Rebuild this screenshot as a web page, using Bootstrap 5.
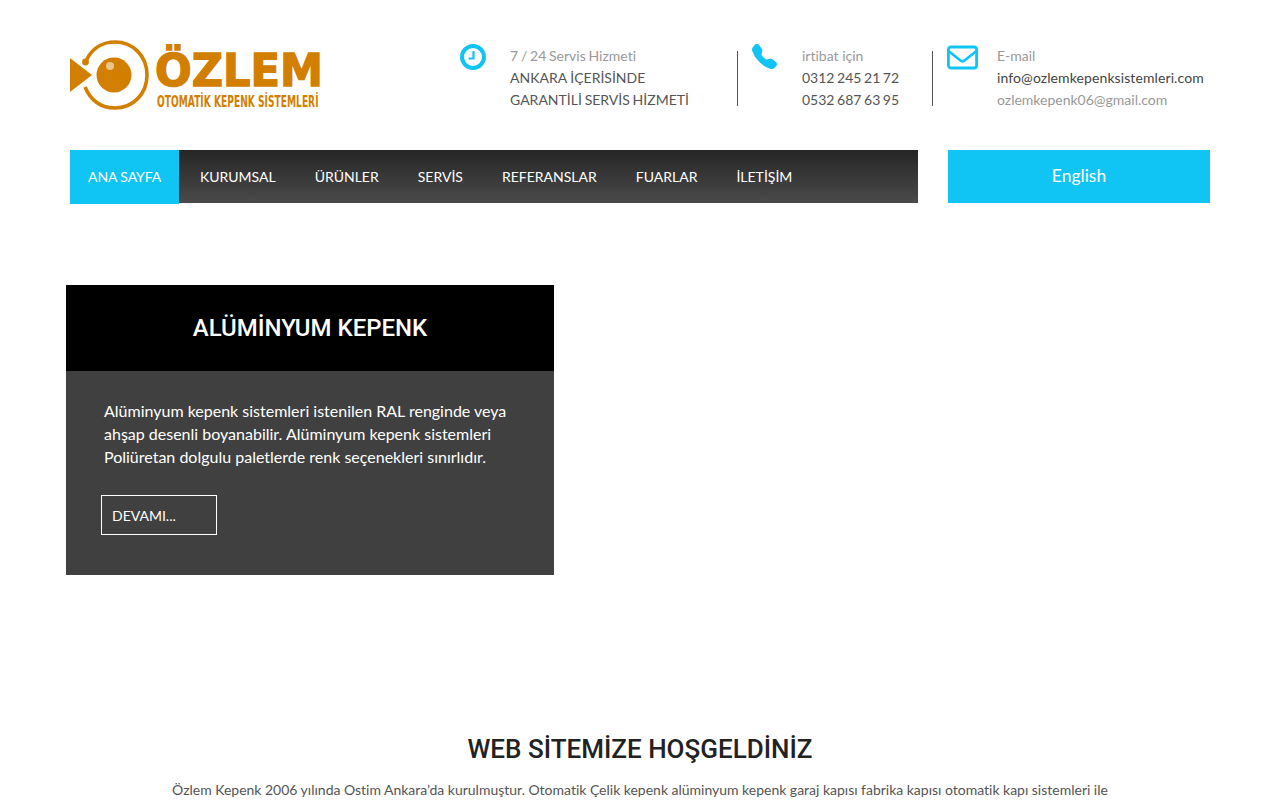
<!DOCTYPE html>
<html lang="tr">
<head>
  <meta charset="UTF-8">
  <meta name="viewport" content="width=device-width, initial-scale=1">
  <title>Özlem Otomatik Kepenk Sistemleri</title>
  <link href="https://cdn.jsdelivr.net/npm/bootstrap@5.3.0/dist/css/bootstrap.min.css" rel="stylesheet">
  <style>
    html, body { height: 800px; overflow: hidden; }
    body { font-family: Lato, "Liberation Sans", sans-serif; font-size: 14px; color: #555; background: #fff; font-variant-ligatures: none; }
    .site-wrap { width: 1140px; margin-left: 70px; }
    .top-head { height: 150px; padding-top: 40px; }
    .logo-box { flex: none; width: 390px; height: 70px; }
    .logo-box svg { display: block; }
    .logo-big { font-family: "DejaVu Sans", sans-serif; font-weight: 700; font-size: 45px; fill: #d27f00; stroke: #d27f00; stroke-width: 1.4px; }
    .logo-small { font-family: "DejaVu Sans", sans-serif; font-weight: 700; font-size: 16px; fill: #d27f00; }
    .info-box { flex: none; height: 66px; margin-top: 5px; line-height: 22px; white-space: nowrap; }
    .info-box svg { display: block; flex: none; }
    .info-1 { width: 278px; }
    .info-2 { width: 181px; margin-left: 14px; }
    .info-3 { margin-left: 14px; }
    .info-line { flex: none; width: 1px; height: 55px; margin: 6px 0 0 auto; background: #555; }
    .icon-cell { flex: none; width: 50px; }
    .info-faint { color: #999; }
    .info-dark { color: #444; letter-spacing: .1px; }
    .tight-words { word-spacing: -.8px; }
    .phone-line { word-spacing: -1px; }
    .nav-row { height: 54px; }
    .main-menu { width: 848px; height: 53px; background: linear-gradient(to bottom, #262626, #4a4a4a); }
    .main-menu a { display: block; height: 53px; line-height: 53px; padding: 0 19.5px; color: #fff; text-decoration: none; text-transform: uppercase; font-size: 14px; white-space: nowrap; }
    .main-menu a.menu-on { background: #10c4f3; width: 109px; height: 54px; padding: 0 18px; margin-right: 1.5px; letter-spacing: -.1px; }
    .lang-btn { display: block; width: 262px; height: 53px; margin-left: 30px; background: #10c4f3; color: #fff; text-align: center; line-height: 51px; font-size: 17.5px; text-decoration: none; }
    .promo-box { width: 488px; height: 290px; margin: 81px 0 0 66px; background: #404040; color: #fff; }
    .promo-head { height: 86px; background: #000; font-family: Roboto, sans-serif; font-weight: 500; font-size: 24px; line-height: 86px; text-align: center; margin: 0; }
    .promo-body { padding: 28px 38px 0 38px; }
    .promo-body p { font-size: 16px; line-height: 23px; margin: 0; }
    .more-btn { display: block; width: 116px; height: 40px; margin: 27px 0 0 -3px; padding: 0 10px; border: 1px solid #fff; border-radius: 0; color: #fff; background: transparent; font-size: 14px; line-height: 39px; text-align: left; }
    .more-btn:hover { color: #fff; }
    .welcome { margin-top: 156px; text-align: center; }
    .welcome h2 { font-family: Roboto, sans-serif; font-weight: 500; font-size: 26px; line-height: 36px; color: #222; margin: 0 0 12px; }
    .welcome p { font-size: 14px; line-height: 22px; margin: 0; color: #555; white-space: nowrap; word-spacing: -.1px; }
  </style>
</head>
<body>
  <div class="site-wrap">
    <div class="top-head d-flex align-items-start">
      <div class="logo-box">
        <svg width="256" height="70" viewBox="0 0 256 70">
          <path d="M0 18 L22 35 L0 52 Z" fill="#d27f00"/>
          <circle cx="44" cy="35" r="17.5" fill="#d27f00"/>
          <circle cx="40" cy="26" r="4" fill="#fff" opacity=".55"/>
          <path d="M16 21 C22 8 33 2 45 2 C63 2 77 16 77 35 C77 54 63 68 45 68 C31 68 21 61 15 47" fill="none" stroke="#d27f00" stroke-width="3.6"/>
          <circle cx="15.5" cy="22" r="3.4" fill="#d27f00"/>
          <text class="logo-big" transform="translate(85 46) scale(.96 1)">ÖZLEM</text>
          <text class="logo-small" transform="translate(87 67) scale(.57 1)">OTOMATİK KEPENK SİSTEMLERİ</text>
        </svg>
      </div>
      <div class="info-box info-1 d-flex">
        <div class="icon-cell">
          <svg width="26" height="26" viewBox="0 0 26 26" style="margin-top:-1px">
            <circle cx="13" cy="13" r="11" fill="none" stroke="#10c4f3" stroke-width="4"/>
            <path d="M13.5 7 V14.5 H8.5" fill="none" stroke="#10c4f3" stroke-width="2.2"/>
          </svg>
        </div>
        <div>
          <div class="info-faint tight-words">7 / 24 Servis Hizmeti</div>
          <div>ANKARA İÇERİSİNDE</div>
          <div class="tight-words">GARANTİLİ SERVİS HİZMETİ</div>
        </div>
        <div class="info-line"></div>
      </div>
      <div class="info-box info-2 d-flex">
        <div class="icon-cell">
          <svg width="25" height="25" viewBox="0 0 16 16" style="margin-top:-1px">
            <path fill="#10c4f3" d="M1.885.511a1.745 1.745 0 0 1 2.61.163L6.29 2.98c.329.423.445.974.315 1.494l-.547 2.19a.678.678 0 0 0 .178.643l2.457 2.457a.678.678 0 0 0 .644.178l2.189-.547a1.745 1.745 0 0 1 1.494.315l2.306 1.794c.829.645.905 1.87.163 2.611l-1.034 1.034c-.74.74-1.846 1.065-2.877.702a18.634 18.634 0 0 1-7.01-4.42 18.634 18.634 0 0 1-4.42-7.009c-.362-1.03-.037-2.137.703-2.877L1.885.511z"/>
          </svg>
        </div>
        <div>
          <div class="info-faint">irtibat için</div>
          <div class="phone-line">0312 245 21 72</div>
          <div class="phone-line">0532 687 63 95</div>
        </div>
        <div class="info-line"></div>
      </div>
      <div class="info-box info-3 d-flex">
        <div class="icon-cell">
          <svg width="31" height="25" viewBox="0 0 31 25">
            <rect x="1.4" y="2" width="28.2" height="21" rx="2.5" fill="none" stroke="#10c4f3" stroke-width="2.8"/>
            <path d="M1.5 6 L13.5 15.5 Q15.5 17 17.5 15.5 L29.5 6" fill="none" stroke="#10c4f3" stroke-width="2.8"/>
          </svg>
        </div>
        <div>
          <div class="info-faint">E-mail</div>
          <div class="info-dark">info@ozlemkepenksistemleri.com</div>
          <div class="info-faint">ozlemkepenk06@gmail.com</div>
        </div>
      </div>
    </div>
    <div class="nav-row d-flex align-items-start">
      <nav class="main-menu d-flex">
        <a class="menu-on" href="#">Ana Sayfa</a>
        <a href="#">Kurumsal</a>
        <a href="#">Ürünler</a>
        <a href="#">Servİs</a>
        <a href="#">Referanslar</a>
        <a href="#">Fuarlar</a>
        <a href="#">İletİşİm</a>
      </nav>
      <a class="lang-btn" href="#">English</a>
    </div>
  </div>

  <div class="promo-box">
    <h3 class="promo-head">ALÜMİNYUM KEPENK</h3>
    <div class="promo-body">
      <p>Alüminyum kepenk sistemleri istenilen RAL renginde veya ahşap desenli boyanabilir. Alüminyum kepenk sistemleri Poliüretan dolgulu paletlerde renk seçenekleri sınırlıdır.</p>
      <a class="btn more-btn" href="#">DEVAMI...</a>
    </div>
  </div>

  <div class="welcome">
    <h2>WEB SİTEMİZE HOŞGELDİNİZ</h2>
    <p>Özlem Kepenk 2006 yılında Ostim Ankara’da kurulmuştur. Otomatik Çelik kepenk alüminyum kepenk garaj kapısı fabrika kapısı otomatik kapı sistemleri ile</p>
  </div>

  <script src="https://cdn.jsdelivr.net/npm/bootstrap@5.3.0/dist/js/bootstrap.bundle.min.js"></script>
</body>
</html>
